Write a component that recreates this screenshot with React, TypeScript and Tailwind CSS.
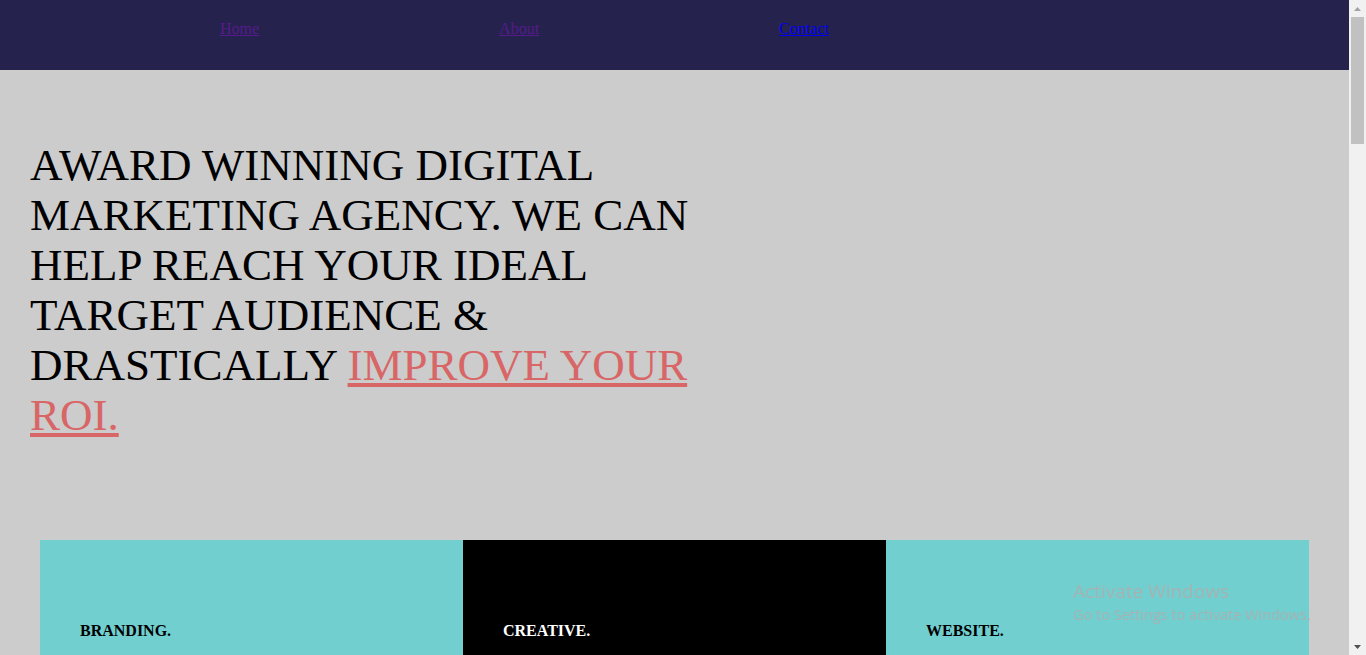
import React from "react";

function FakeScrollbar() {
  return (
    <div className="fixed right-0 top-0 w-[17px] h-[655px] bg-[#f1f1f1] flex flex-col items-center">
      <div className="h-[17px] w-full flex items-center justify-center">
        <svg width="7" height="4" viewBox="0 0 7 4"><path d="M3.5 0 L7 4 L0 4 Z" fill="#a3a3a3" /></svg>
      </div>
      <div className="w-[13px] h-[127px] bg-[#c1c1c1]" />
      <div className="flex-1" />
      <div className="h-[17px] w-full flex items-center justify-center">
        <svg width="7" height="4" viewBox="0 0 7 4"><path d="M0 0 L7 0 L3.5 4 Z" fill="#505050" /></svg>
      </div>
    </div>
  );
}

export default function App() {
  return (
    <div className="flex bg-[#cccccc]">
      <div className="w-[1349px] min-h-[1200px] font-['Liberation_Serif',serif] text-black">
        <nav className="h-[70px] bg-[#25234d] flex items-start pt-[17px] text-[16px]">
          <a href="#" className="ml-[220px] underline text-[#551a8b]">Home</a>
          <a href="#" className="ml-[240px] underline text-[#551a8b]">About</a>
          <a href="#" className="ml-[240px] underline text-[#0000ee]">Contact</a>
        </nav>
        <section className="h-[470px] pt-[70px] pl-[30px]">
          <h1 className="w-[692px] text-[45px] leading-[50px] font-normal">
            AWARD WINNING DIGITAL MARKETING AGENCY. WE CAN HELP REACH YOUR IDEAL TARGET AUDIENCE &amp; DRASTICALLY{" "}
            <a href="#" className="underline text-[#d96666]">IMPROVE YOUR ROI.</a>
          </h1>
        </section>
        <section className="mx-[40px] grid grid-cols-3">
          <div className="h-[300px] bg-[#72cfd0] pt-[79px] pl-[40px]">
            <h3 className="text-[16px] font-bold">BRANDING.</h3>
          </div>
          <div className="h-[300px] bg-black pt-[79px] pl-[40px]">
            <h3 className="text-[16px] font-bold text-white">CREATIVE.</h3>
          </div>
          <div className="h-[300px] bg-[#72cfd0] pt-[79px] pl-[40px]">
            <h3 className="text-[16px] font-bold">WEBSITE.</h3>
          </div>
        </section>
      </div>
      <div className="w-[17px] shrink-0" />
      <FakeScrollbar />
      <div className="fixed left-[1073px] top-[578px] font-['Open_Sans',sans-serif] text-[#a6b2b2] pointer-events-none">
        <div className="text-[19px] leading-[26px]">Activate Windows</div>
        <div className="text-[14.5px] leading-[20px] mt-[1px]">Go to Settings to activate Windows.</div>
      </div>
    </div>
  );
}
